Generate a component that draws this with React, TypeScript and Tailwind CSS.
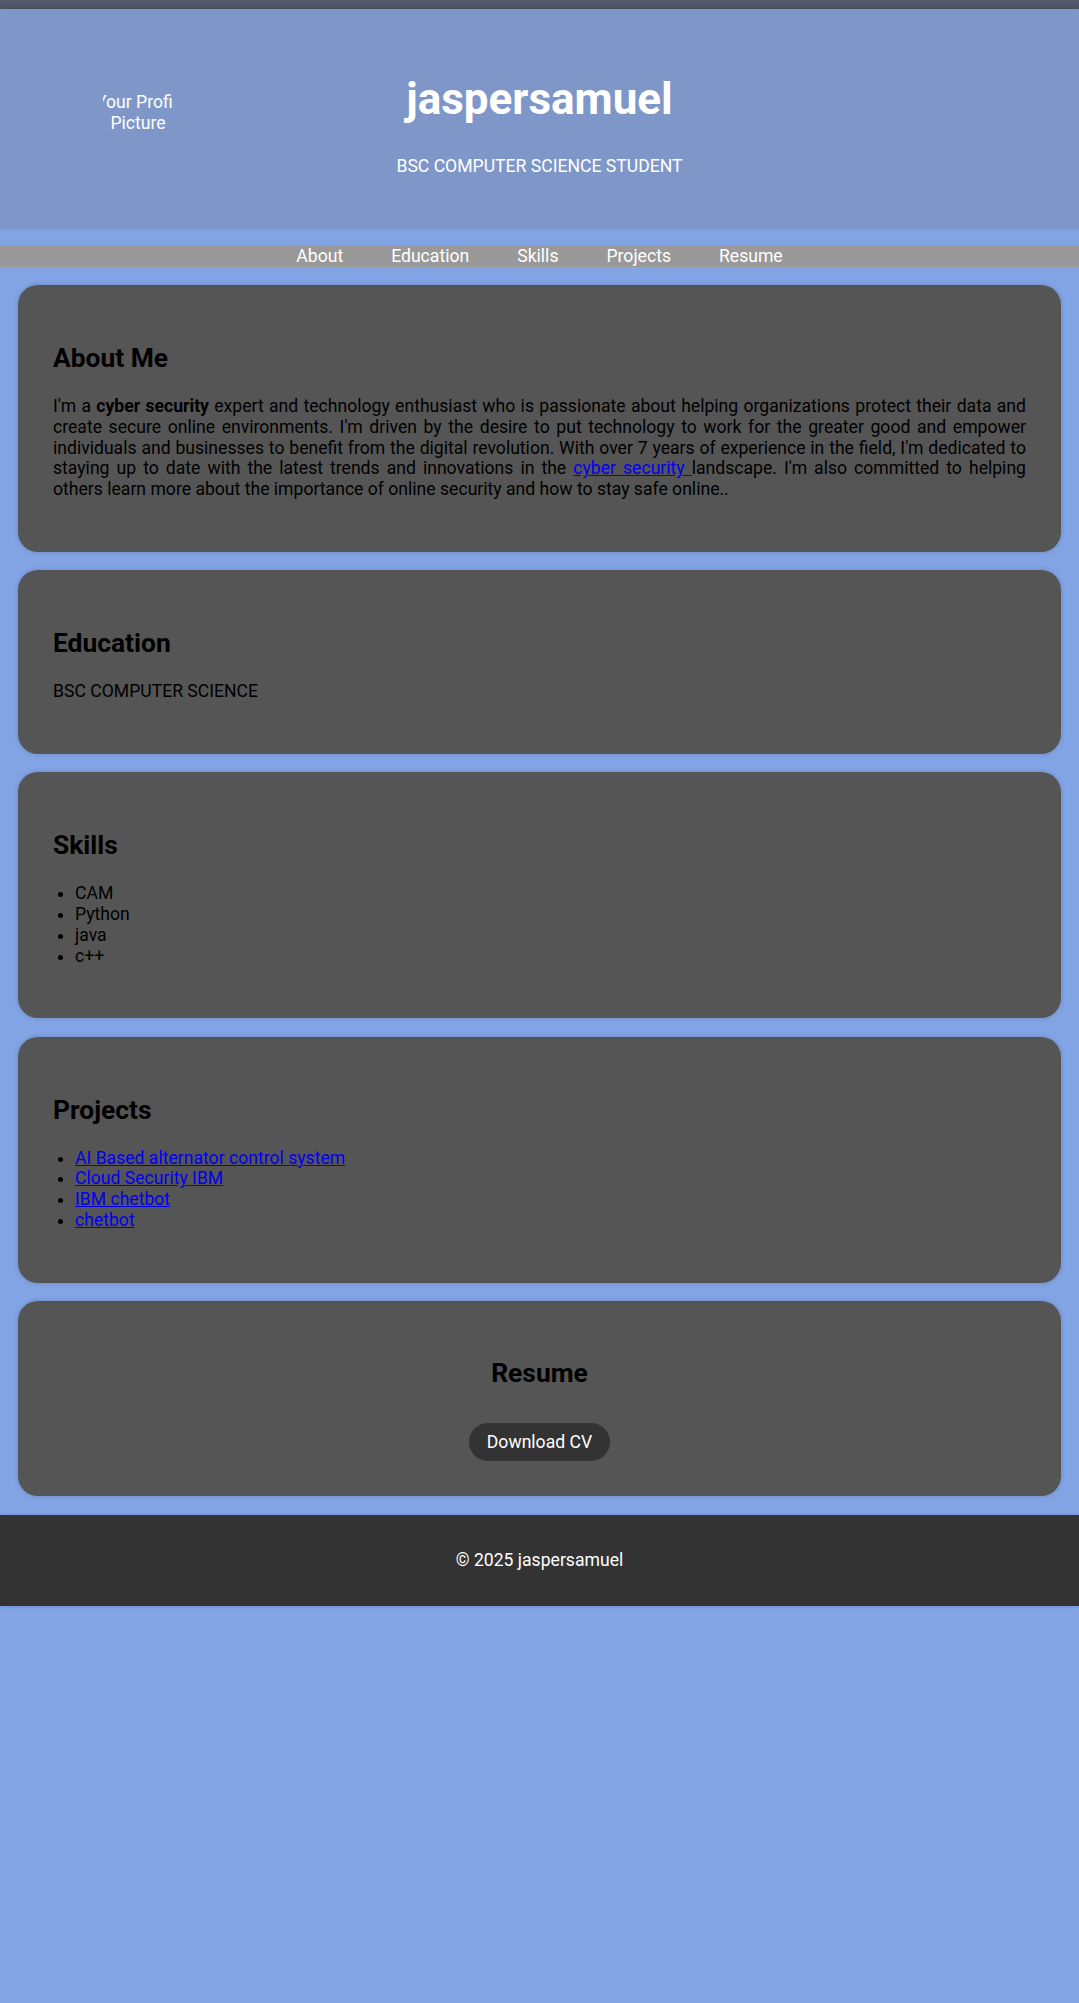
import React from "react";

const navLinks = ["About", "Education", "Skills", "Projects", "Resume"];
const skills = ["CAM", "Python", "java", "c++"];
const projects = [
  "AI Based alternator control system",
  "Cloud Security IBM",
  "IBM chetbot",
  "chetbot",
];

function Card({ title, children }: { title: string; children: React.ReactNode }) {
  return (
    <section className="bg-[#555555] rounded-[20px] px-[35px] pt-[58px] pb-[52px] shadow-[0_0_5px_rgba(0,0,0,0.18)]">
      <h2 className="text-[26.4px] leading-[31px] font-bold text-black mb-[22px]">{title}</h2>
      {children}
    </section>
  );
}

export default function App() {
  return (
    <div className="min-h-screen bg-[#82a4e5] [font-family:Roboto,sans-serif] text-[17.6px] leading-[20.7px] text-black">
      <div className="h-[9px] bg-[#545a6b]" />
      <header className="bg-[#7e97c8] grid grid-cols-[1fr_auto_1fr] items-start pt-[65px] pb-[52.5px] text-white shadow-[0_-2px_4px_rgba(0,0,0,0.15)]">
        <div className="pl-[98px] pt-[18px]">
          <div className="w-[80px] text-center">
            <div className="w-[70px] mx-auto overflow-hidden whitespace-nowrap text-left">
              <span className="inline-block -ml-[7px]">Your Profile</span>
            </div>
            <div>Picture</div>
          </div>
        </div>
        <div className="text-center">
          <h1 className="text-[44px] leading-[51.5px] font-bold">jaspersamuel</h1>
          <p className="mt-[30px]">BSC COMPUTER SCIENCE STUDENT</p>
        </div>
        <div />
      </header>

      <nav className="mt-[17px] bg-[#999999] flex justify-center gap-[48px] text-white leading-[21px]">
        {navLinks.map((l) => (
          <a key={l} href={`#${l.toLowerCase()}`}>
            {l}
          </a>
        ))}
      </nav>

      <main className="px-[18px] pt-[18.5px] flex flex-col gap-[18.5px]">
        <Card title="About Me">
          <p className="text-justify">
            I'm a <b>cyber security</b> expert and technology enthusiast who is passionate about helping
            organizations protect their data and create secure online environments. I'm driven by the desire
            to put technology to work for the greater good and empower individuals and businesses to benefit
            from the digital revolution. With over 7 years of experience in the field, I'm dedicated to staying
            up to date with the latest trends and innovations in the{" "}
            <a href="#" className="text-[#0000ee] underline">
              cyber security{" "}
            </a>
            landscape. I'm also committed to helping others learn more about the importance of online security
            and how to stay safe online..
          </p>
        </Card>

        <Card title="Education">
          <p>BSC COMPUTER SCIENCE</p>
        </Card>

        <Card title="Skills">
          <ul className="list-disc pl-[22px]">
            {skills.map((s) => (
              <li key={s}>{s}</li>
            ))}
          </ul>
        </Card>

        <Card title="Projects">
          <ul className="list-disc pl-[22px]">
            {projects.map((p) => (
              <li key={p}>
                <a href="#" className="text-[#0000ee] underline">
                  {p}
                </a>
              </li>
            ))}
          </ul>
        </Card>

        <section className="bg-[#555555] rounded-[20px] pt-[57px] pb-[35px] text-center shadow-[0_0_5px_rgba(0,0,0,0.18)]">
          <h2 className="text-[26.4px] leading-[31px] font-bold text-black">Resume</h2>
          <a
            href="#"
            className="inline-block mt-[34px] bg-[#333333] text-white rounded-full px-[18px] py-[8.5px]"
          >
            Download CV
          </a>
        </section>
      </main>

      <footer className="mt-[19px] h-[91px] bg-[#333333] flex items-center justify-center text-white shadow-[0_0_3px_rgba(0,0,0,0.2)]">
        <p>© 2025 jaspersamuel</p>
      </footer>
    </div>
  );
}
